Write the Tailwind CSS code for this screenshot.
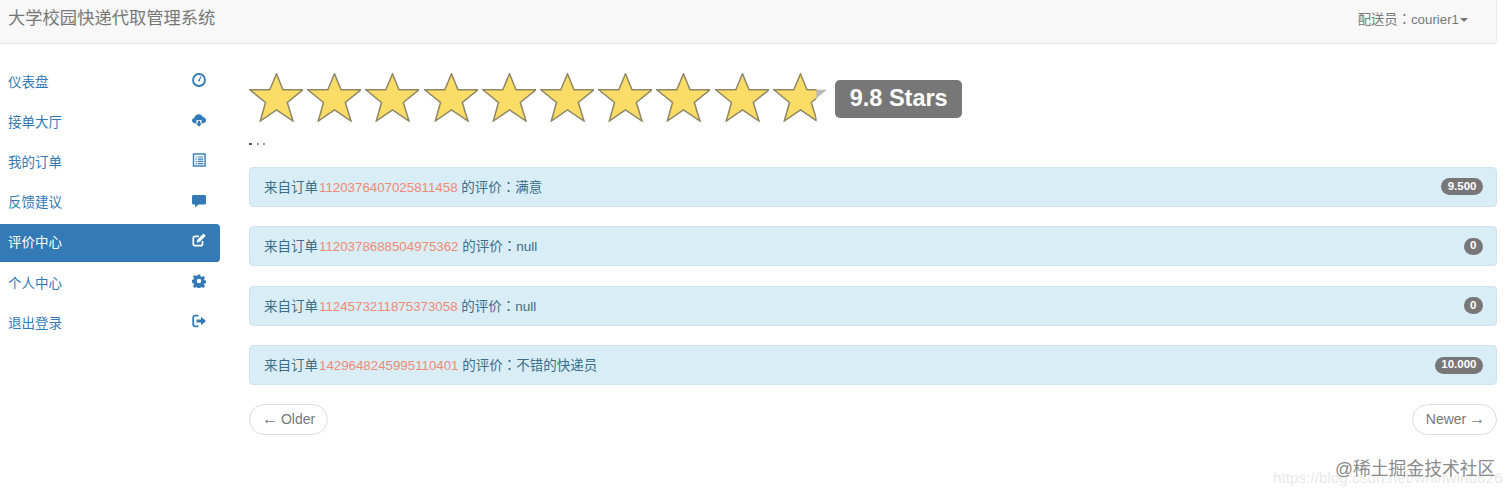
<!DOCTYPE html>
<html lang="zh-CN">
<head>
    <meta charset="UTF-8">
    <meta name="viewport" content="width=device-width, initial-scale=1.0">
    <title>大学校园快递代取管理系统</title>
    <script src="https://cdn.jsdelivr.net/npm/@tailwindcss/browser@4"></script>
</head>
<body class="relative h-[495px] overflow-hidden bg-white font-['Liberation_Sans','Noto_Sans_CJK_SC',sans-serif]">
    <svg class="absolute w-0 h-0">
        <defs>
            <polygon id="star" points="27.500,0.800 34,16.800 53.900,16.800 38.300,29.500 44,48 27.500,36.800 11.300,48 16.500,29.500 0.800,16.800 20.800,16.800" />
            <clipPath id="starCut"><rect x="0" y="0" width="43.500" height="49" /></clipPath>
        </defs>
    </svg>

    <div class="w-[1497px]">
        <!-- navbar -->
        <header class="h-[44px] flex items-center justify-between pl-2 pr-[28px] pb-[5px] bg-[#f8f8f8] border-b border-r border-[#e7e7e7] rounded-br">
            <span class="text-[17.300px] text-[#777]">大学校园快递代取管理系统</span>
            <span class="flex items-center gap-[1px] text-[13.300px] text-[#777]"><span>配送员<span lang="zh-TW" class="font-['Noto_Sans_CJK_TC']">：</span>courier1</span><i class="mt-[1px] border-x-[4px] border-t-[4px] border-x-transparent border-t-[#777]"></i></span>
        </header>

        <div class="flex">
            <!-- sidebar -->
            <nav class="w-[220px] pt-[19px] flex flex-col gap-[2.200px] text-[13.500px] text-[#337ab7]">
                <a class="h-[38px] flex items-center justify-between pl-2 pr-[14px] pt-[2px]">仪表盘
                    <svg class="w-[14px] h-[14px] -mt-[6px]" viewBox="0 0 14 14"><circle cx="7" cy="7" r="6" fill="none" stroke="currentColor" stroke-width="1.800"/><path d="M7 7.500 9 3.600" stroke="currentColor" stroke-width="1.100"/><circle cx="7" cy="7.500" r="1" fill="currentColor"/></svg>
                </a>
                <a class="h-[38px] flex items-center justify-between pl-2 pr-[14px] pt-[2px]">接单大厅
                    <svg class="w-[14px] h-[14px] -mt-[6px]" viewBox="0 0 14 14"><path fill="currentColor" d="M3 10.200C1.200 10.200 0 9 0 7.600 0 6.200 1 5.200 2.300 5 2.600 3 4.400 1.200 6.800 1.200c2 0 3.500 1.200 4 2.900 1.800.1 3.200 1.600 3.200 3.200 0 1.600-1.300 2.900-3 2.900H9.500V7H4.500v3.200z"/><path fill="currentColor" d="M5.800 7.800h2.400v2.800H10L7 13.800 4 10.600h1.800z"/></svg>
                </a>
                <a class="h-[38px] flex items-center justify-between pl-2 pr-[14px] pt-[2px]">我的订单
                    <svg class="w-[14px] h-[14px] -mt-[6px]" viewBox="0 0 14 14"><rect x="1.500" y="1" width="11.500" height="12" fill="none" stroke="currentColor" stroke-width="1.400"/><path d="M3.500 4h1.200M3.500 6.200h1.200M3.500 8.400h1.200M3.500 10.600h1.200M5.800 4h5.400M5.800 6.200h5.400M5.800 8.400h5.400M5.800 10.600h5.400" stroke="currentColor" stroke-width="1.200"/></svg>
                </a>
                <a class="h-[38px] flex items-center justify-between pl-2 pr-[14px] pt-[2px]">反馈建议
                    <svg class="w-[14px] h-[14px] -mt-[6px]" viewBox="0 0 14 14"><path fill="currentColor" d="M1.500 1h11c.8 0 1.500.7 1.500 1.500v6.500c0 .8-.7 1.500-1.500 1.500H6.500L3 13.500v-3H1.500C.7 10.500 0 9.800 0 9V2.500C0 1.700.7 1 1.500 1z"/></svg>
                </a>
                <a class="h-[38px] flex items-center justify-between pl-2 pr-[14px] pt-[2px] bg-[#337ab7] text-white rounded-r border-b border-[#2e6da4]">评价中心
                    <svg class="w-[14px] h-[14px] -mt-[6px]" viewBox="0 0 14 14"><path fill="none" stroke="currentColor" stroke-width="1.700" d="M10.500 8v3c0 1-.6 1.700-1.600 1.700H3c-1 0-1.700-.7-1.700-1.700V5C1.300 4 2 3.300 3 3.300h4"/><path fill="currentColor" d="M11.500.5 13.800 2.800 7.600 9 4.800 9.600 5.300 6.700z"/></svg>
                </a>
                <a class="h-[38px] flex items-center justify-between pl-2 pr-[14px] pt-[2px]">个人中心
                    <svg class="w-[14px] h-[14px] -mt-[6px]" viewBox="0 0 14 14"><path fill="currentColor" fill-rule="evenodd" d="M5.800.5h2.400l.4 1.900 1.100.5 1.700-1 1.600 1.600-1 1.700.5 1.100 1.900.4v2.400l-1.900.4-.5 1.100 1 1.700-1.600 1.600-1.700-1-1.100.5-.4 1.900H5.800l-.4-1.900-1.100-.5-1.700 1-1.600-1.600 1-1.700-.5-1.100L-.400 8.200V5.800l1.900-.4.500-1.100-1-1.700 1.600-1.600 1.700 1 1.100-.5zM7 4.800a2.200 2.200 0 1 0 0 4.400 2.200 2.200 0 0 0 0-4.400z"/></svg>
                </a>
                <a class="h-[38px] flex items-center justify-between pl-2 pr-[14px] pt-[2px]">退出登录
                    <svg class="w-[14px] h-[14px] -mt-[6px]" viewBox="0 0 14 14"><path fill="none" stroke="currentColor" stroke-width="1.800" d="M6.500 1.700H3.200C2 1.700 1.200 2.500 1.200 3.700v6.600c0 1.200.8 2 2 2h3.300"/><path fill="currentColor" d="M4.500 5.500h4.500V2.800L14 7 9 11.200V8.500H4.500z"/></svg>
                </a>
            </nav>

            <!-- reviews -->
            <main class="flex-1 ml-[29px] pt-[28.500px]">
                <div class="flex items-start">
                    <div class="flex gap-[4.200px]">
                        <svg class="w-[54px] h-[49px]" viewBox="0 0 54 49"><use href="#star" fill="#fbdc66" stroke="#8d8765" stroke-width="1.500"/></svg>
                        <svg class="w-[54px] h-[49px]" viewBox="0 0 54 49"><use href="#star" fill="#fbdc66" stroke="#8d8765" stroke-width="1.500"/></svg>
                        <svg class="w-[54px] h-[49px]" viewBox="0 0 54 49"><use href="#star" fill="#fbdc66" stroke="#8d8765" stroke-width="1.500"/></svg>
                        <svg class="w-[54px] h-[49px]" viewBox="0 0 54 49"><use href="#star" fill="#fbdc66" stroke="#8d8765" stroke-width="1.500"/></svg>
                        <svg class="w-[54px] h-[49px]" viewBox="0 0 54 49"><use href="#star" fill="#fbdc66" stroke="#8d8765" stroke-width="1.500"/></svg>
                        <svg class="w-[54px] h-[49px]" viewBox="0 0 54 49"><use href="#star" fill="#fbdc66" stroke="#8d8765" stroke-width="1.500"/></svg>
                        <svg class="w-[54px] h-[49px]" viewBox="0 0 54 49"><use href="#star" fill="#fbdc66" stroke="#8d8765" stroke-width="1.500"/></svg>
                        <svg class="w-[54px] h-[49px]" viewBox="0 0 54 49"><use href="#star" fill="#fbdc66" stroke="#8d8765" stroke-width="1.500"/></svg>
                        <svg class="w-[54px] h-[49px]" viewBox="0 0 54 49"><use href="#star" fill="#fbdc66" stroke="#8d8765" stroke-width="1.500"/></svg>
                        <svg class="w-[54px] h-[49px]" viewBox="0 0 54 49"><use href="#star" fill="#b8b8b8"/><g clip-path="url(#starCut)"><use href="#star" fill="#fbdc66" stroke="#8d8765" stroke-width="1.500"/></g></svg>
                    </div>
                    <span class="ml-[8px] mt-[7px] pl-[1px] h-[38px] w-[127px] flex items-center justify-center rounded-[5px] bg-[#777] text-white text-[23.500px] font-bold">9.8 Stars</span>
                </div>

                <!-- clipped line left under the stars -->
                <div class="mt-[21px] h-[2px] w-[22px] bg-[linear-gradient(90deg,#555_0_3px,transparent_3px_8px,#999_8px_10px,transparent_10px_14px,#999_14px_16px,transparent_16px)]"></div>

                <div class="mt-[22px] flex flex-col gap-[19.500px] text-[13.500px] text-[#3b6e88]">
                    <div class="h-[40px] flex items-center justify-between pl-[14px] pr-[13px] bg-[#d9edf7] border border-[#cfe3ec] rounded">
                        <span class="mt-[1px]">来自订单<a class="ml-[1px] text-[13.300px] text-[#f08a74]">1120376407025811458</a> 的评价<span lang="zh-TW" class="font-['Noto_Sans_CJK_TC']">：</span>满意</span>
                        <span class="h-[17px] px-[6.500px] flex items-center rounded-full bg-[#777] text-white text-[11.500px] font-bold">9.500</span>
                    </div>
                    <div class="h-[40px] flex items-center justify-between pl-[14px] pr-[13px] bg-[#d9edf7] border border-[#cfe3ec] rounded">
                        <span class="mt-[1px]">来自订单<a class="ml-[1px] text-[13.300px] text-[#f08a74]">1120378688504975362</a> 的评价<span lang="zh-TW" class="font-['Noto_Sans_CJK_TC']">：</span>null</span>
                        <span class="h-[17px] px-[6.500px] flex items-center rounded-full bg-[#777] text-white text-[11.500px] font-bold">0</span>
                    </div>
                    <div class="h-[40px] flex items-center justify-between pl-[14px] pr-[13px] bg-[#d9edf7] border border-[#cfe3ec] rounded">
                        <span class="mt-[1px]">来自订单<a class="ml-[1px] text-[13.300px] text-[#f08a74]">1124573211875373058</a> 的评价<span lang="zh-TW" class="font-['Noto_Sans_CJK_TC']">：</span>null</span>
                        <span class="h-[17px] px-[6.500px] flex items-center rounded-full bg-[#777] text-white text-[11.500px] font-bold">0</span>
                    </div>
                    <div class="h-[40px] flex items-center justify-between pl-[14px] pr-[13px] bg-[#d9edf7] border border-[#cfe3ec] rounded">
                        <span class="mt-[1px]">来自订单<a class="ml-[1px] text-[13.300px] text-[#f08a74]">1429648245995110401</a> 的评价<span lang="zh-TW" class="font-['Noto_Sans_CJK_TC']">：</span>不错的快递员</span>
                        <span class="h-[17px] px-[6.500px] flex items-center rounded-full bg-[#777] text-white text-[11.500px] font-bold">10.000</span>
                    </div>
                </div>

                <div class="mt-[18.500px] flex justify-between text-[14px] text-[#777]">
                    <a class="h-[31px] w-[79px] pt-[1px] flex items-center justify-center gap-[3px] rounded-full border border-[#ddd] bg-white"><span class="-mt-[2px] text-[16px] leading-none">←</span>Older</a>
                    <a class="h-[31px] w-[85px] pl-[2px] pt-[1px] flex items-center justify-center gap-[3px] rounded-full border border-[#ddd] bg-white">Newer<span class="-mt-[2px] text-[16px] leading-none">→</span></a>
                </div>
            </main>
        </div>
    </div>

    <!-- watermarks over the page -->
    <span class="absolute left-[1273px] top-[470px] text-[15.300px] leading-[16px] text-[#e9e9e9] whitespace-nowrap">https://blog.csdn.net/wnlnwinb626</span>
    <span class="absolute left-[1335px] top-[459px] text-[17.800px] leading-[20px] text-[#8a8a8a] whitespace-nowrap">@稀土掘金技术社区</span>
</body>
</html>
